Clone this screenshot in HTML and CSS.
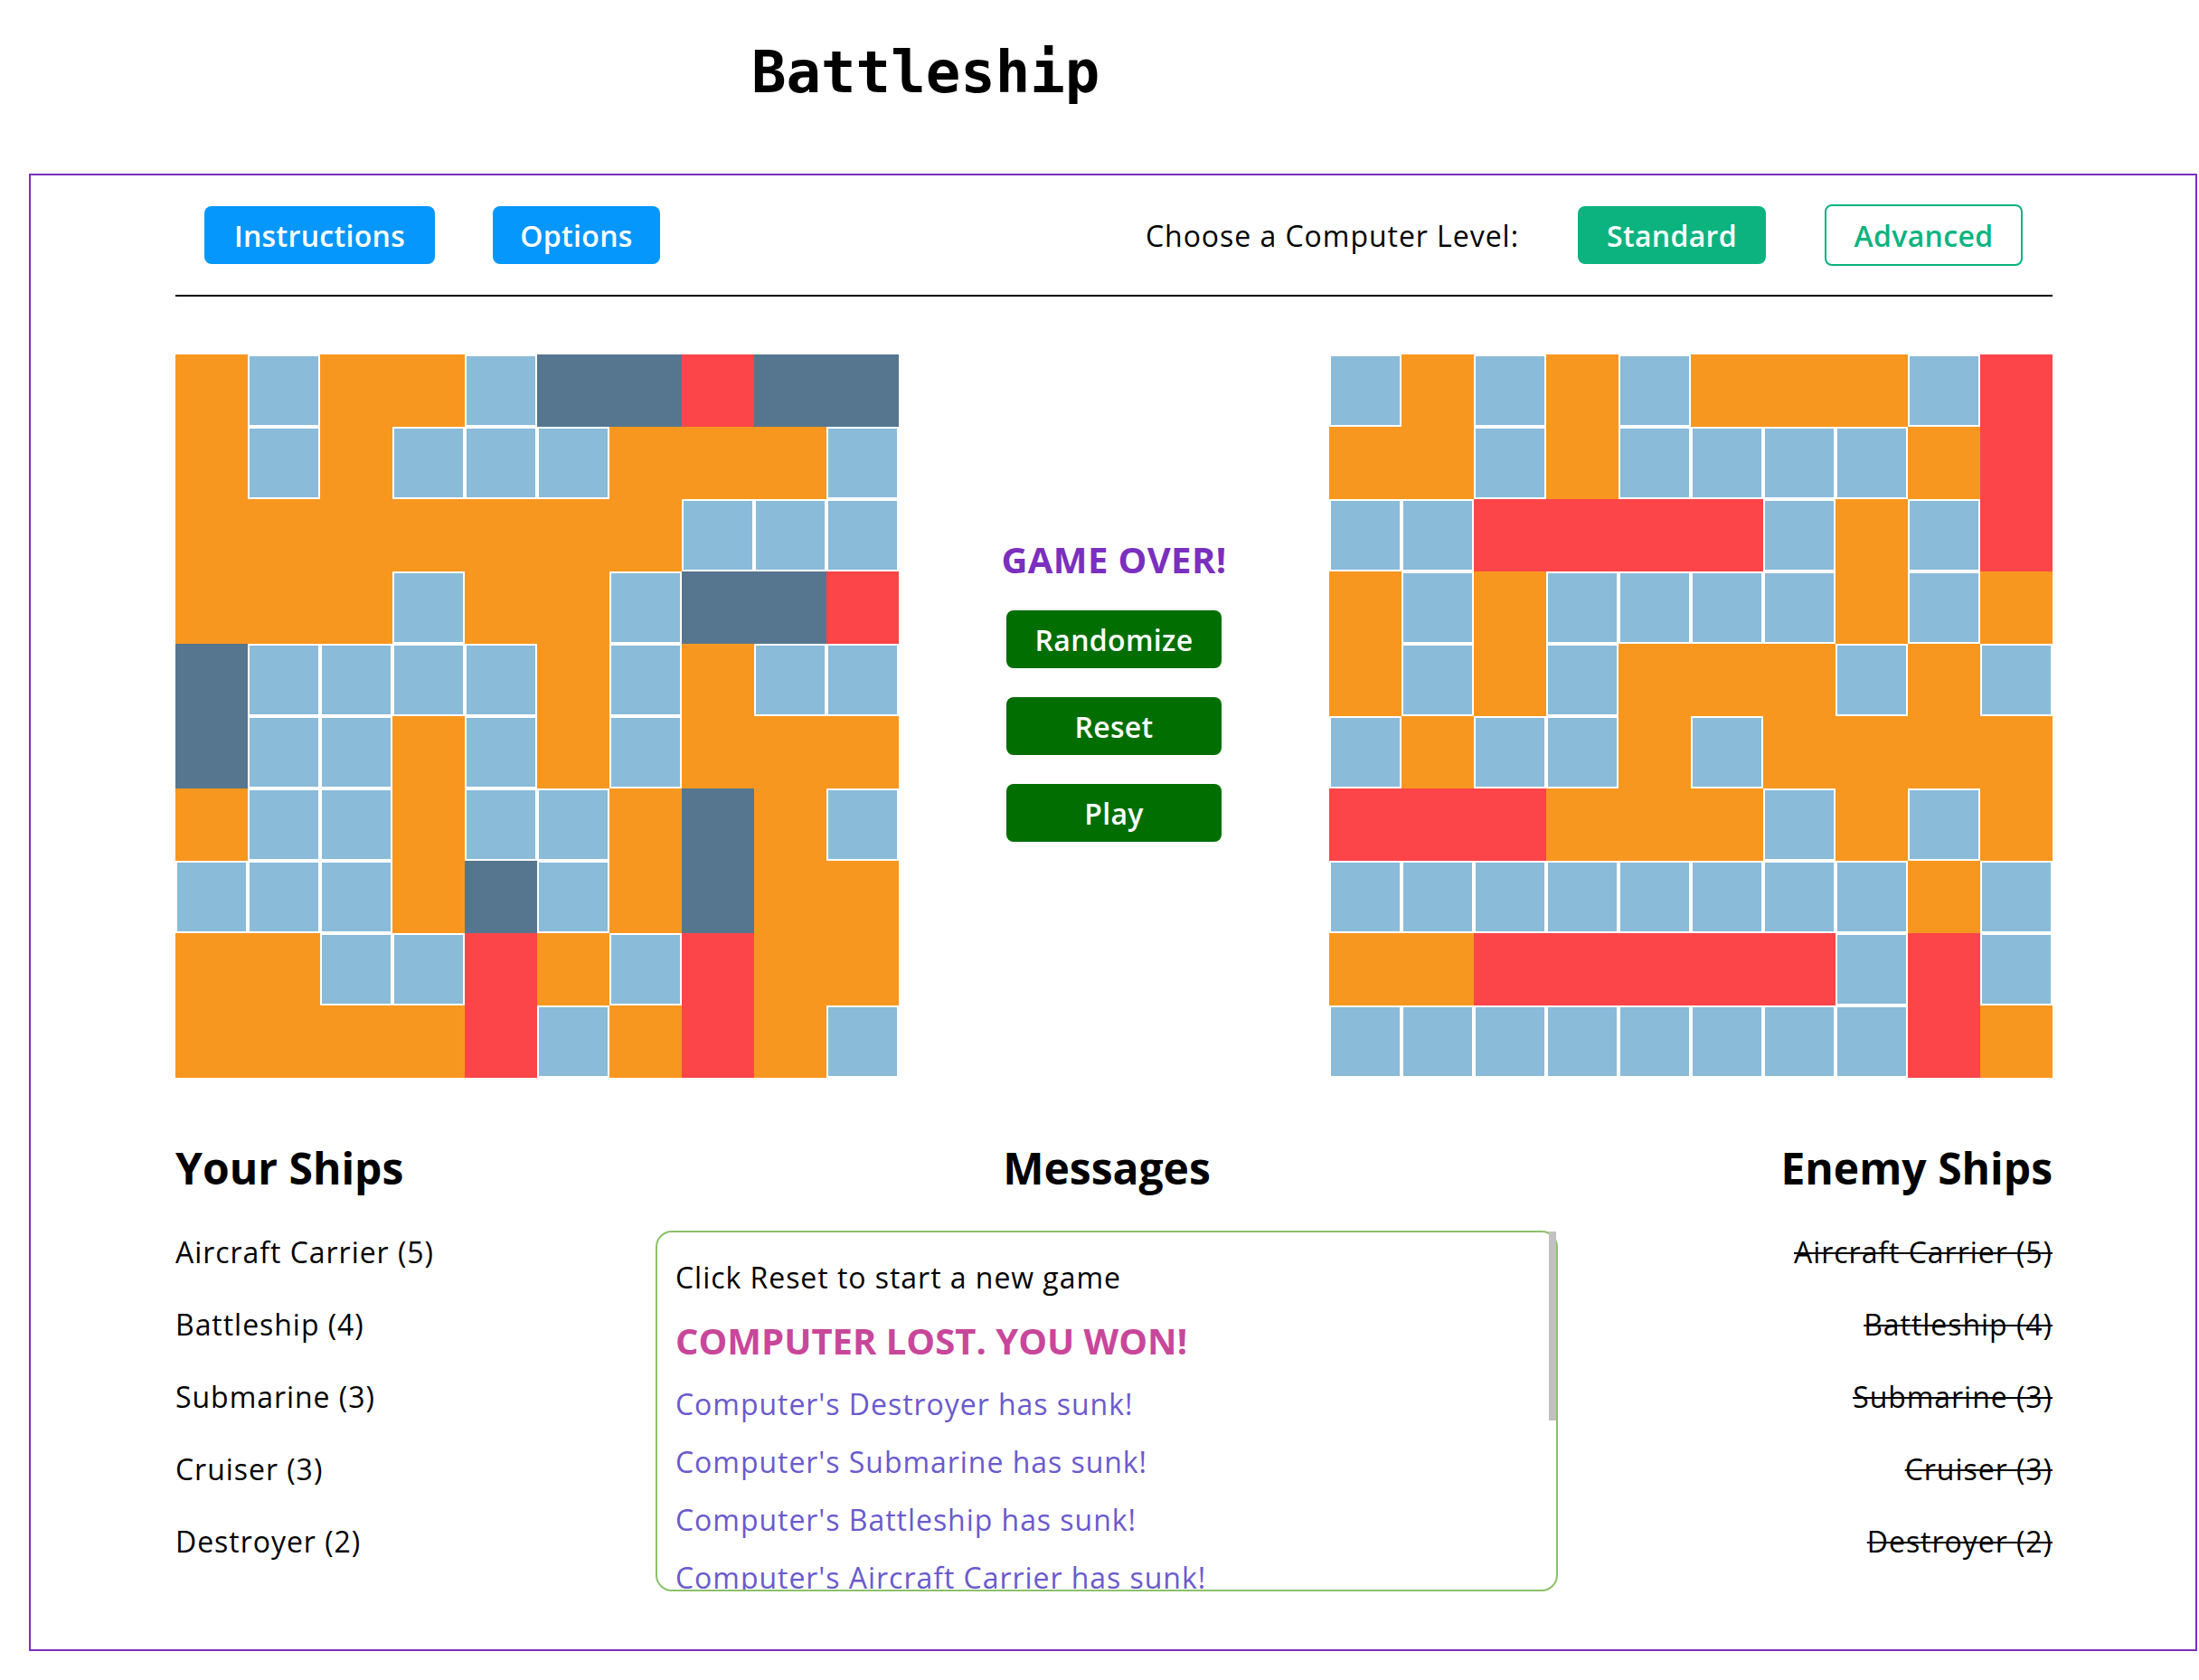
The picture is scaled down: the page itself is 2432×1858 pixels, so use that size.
FILE: index.html
```html
<!DOCTYPE html>
<html lang="en">
<head>
<meta charset="utf-8">
<title>Battleship</title>
<link rel="stylesheet" href="styles.css">
</head>
<body>
<h1 class="page-title">Battleship</h1>
<main class="game">
  <div class="toolbar">
    <div class="toolbar-group">
      <button class="btn btn-blue btn-instructions">Instructions</button>
      <button class="btn btn-blue btn-options">Options</button>
    </div>
    <div class="toolbar-group level-group">
      <span class="level-label">Choose a Computer Level:</span>
      <button class="btn btn-green btn-standard">Standard</button>
      <button class="btn btn-outline btn-advanced">Advanced</button>
    </div>
  </div>

  <div class="boards">
    <div class="board">
      <div class="c o"></div><div class="c b"></div><div class="c o"></div><div class="c o"></div><div class="c b"></div><div class="c d"></div><div class="c d"></div><div class="c r"></div><div class="c d"></div><div class="c d"></div>
      <div class="c o"></div><div class="c b"></div><div class="c o"></div><div class="c b"></div><div class="c b"></div><div class="c b"></div><div class="c o"></div><div class="c o"></div><div class="c o"></div><div class="c b"></div>
      <div class="c o"></div><div class="c o"></div><div class="c o"></div><div class="c o"></div><div class="c o"></div><div class="c o"></div><div class="c o"></div><div class="c b"></div><div class="c b"></div><div class="c b"></div>
      <div class="c o"></div><div class="c o"></div><div class="c o"></div><div class="c b"></div><div class="c o"></div><div class="c o"></div><div class="c b"></div><div class="c d"></div><div class="c d"></div><div class="c r"></div>
      <div class="c d"></div><div class="c b"></div><div class="c b"></div><div class="c b"></div><div class="c b"></div><div class="c o"></div><div class="c b"></div><div class="c o"></div><div class="c b"></div><div class="c b"></div>
      <div class="c d"></div><div class="c b"></div><div class="c b"></div><div class="c o"></div><div class="c b"></div><div class="c o"></div><div class="c b"></div><div class="c o"></div><div class="c o"></div><div class="c o"></div>
      <div class="c o"></div><div class="c b"></div><div class="c b"></div><div class="c o"></div><div class="c b"></div><div class="c b"></div><div class="c o"></div><div class="c d"></div><div class="c o"></div><div class="c b"></div>
      <div class="c b"></div><div class="c b"></div><div class="c b"></div><div class="c o"></div><div class="c d"></div><div class="c b"></div><div class="c o"></div><div class="c d"></div><div class="c o"></div><div class="c o"></div>
      <div class="c o"></div><div class="c o"></div><div class="c b"></div><div class="c b"></div><div class="c r"></div><div class="c o"></div><div class="c b"></div><div class="c r"></div><div class="c o"></div><div class="c o"></div>
      <div class="c o"></div><div class="c o"></div><div class="c o"></div><div class="c o"></div><div class="c r"></div><div class="c b"></div><div class="c o"></div><div class="c r"></div><div class="c o"></div><div class="c b"></div>
    </div>

    <div class="controls">
      <div class="game-over">GAME OVER!</div>
      <button class="btn btn-dark">Randomize</button>
      <button class="btn btn-dark">Reset</button>
      <button class="btn btn-dark">Play</button>
    </div>

    <div class="board">
      <div class="c b"></div><div class="c o"></div><div class="c b"></div><div class="c o"></div><div class="c b"></div><div class="c o"></div><div class="c o"></div><div class="c o"></div><div class="c b"></div><div class="c r"></div>
      <div class="c o"></div><div class="c o"></div><div class="c b"></div><div class="c o"></div><div class="c b"></div><div class="c b"></div><div class="c b"></div><div class="c b"></div><div class="c o"></div><div class="c r"></div>
      <div class="c b"></div><div class="c b"></div><div class="c r"></div><div class="c r"></div><div class="c r"></div><div class="c r"></div><div class="c b"></div><div class="c o"></div><div class="c b"></div><div class="c r"></div>
      <div class="c o"></div><div class="c b"></div><div class="c o"></div><div class="c b"></div><div class="c b"></div><div class="c b"></div><div class="c b"></div><div class="c o"></div><div class="c b"></div><div class="c o"></div>
      <div class="c o"></div><div class="c b"></div><div class="c o"></div><div class="c b"></div><div class="c o"></div><div class="c o"></div><div class="c o"></div><div class="c b"></div><div class="c o"></div><div class="c b"></div>
      <div class="c b"></div><div class="c o"></div><div class="c b"></div><div class="c b"></div><div class="c o"></div><div class="c b"></div><div class="c o"></div><div class="c o"></div><div class="c o"></div><div class="c o"></div>
      <div class="c r"></div><div class="c r"></div><div class="c r"></div><div class="c o"></div><div class="c o"></div><div class="c o"></div><div class="c b"></div><div class="c o"></div><div class="c b"></div><div class="c o"></div>
      <div class="c b"></div><div class="c b"></div><div class="c b"></div><div class="c b"></div><div class="c b"></div><div class="c b"></div><div class="c b"></div><div class="c b"></div><div class="c o"></div><div class="c b"></div>
      <div class="c o"></div><div class="c o"></div><div class="c r"></div><div class="c r"></div><div class="c r"></div><div class="c r"></div><div class="c r"></div><div class="c b"></div><div class="c r"></div><div class="c b"></div>
      <div class="c b"></div><div class="c b"></div><div class="c b"></div><div class="c b"></div><div class="c b"></div><div class="c b"></div><div class="c b"></div><div class="c b"></div><div class="c r"></div><div class="c o"></div>
    </div>
  </div>

  <div class="info">
    <section class="ships">
      <h2 class="section-title">Your Ships</h2>
      <ul class="ship-list">
        <li>Aircraft Carrier (5)</li>
        <li>Battleship (4)</li>
        <li>Submarine (3)</li>
        <li>Cruiser (3)</li>
        <li>Destroyer (2)</li>
      </ul>
    </section>
    <section class="messages-col">
      <h2 class="section-title center">Messages</h2>
      <div class="messages-frame">
        <div class="messages">
          <p class="msg">Click Reset to start a new game</p>
          <p class="msg msg-win">COMPUTER LOST. YOU WON!</p>
          <p class="msg msg-sunk">Computer's Destroyer has sunk!</p>
          <p class="msg msg-sunk">Computer's Submarine has sunk!</p>
          <p class="msg msg-sunk">Computer's Battleship has sunk!</p>
          <p class="msg msg-sunk">Computer's Aircraft Carrier has sunk!</p>
        </div>
        <span class="scroll-thumb"></span>
      </div>
    </section>
    <section class="ships ships-enemy">
      <h2 class="section-title">Enemy Ships</h2>
      <ul class="ship-list sunk">
        <li>Aircraft Carrier (5)</li>
        <li>Battleship (4)</li>
        <li>Submarine (3)</li>
        <li>Cruiser (3)</li>
        <li>Destroyer (2)</li>
      </ul>
    </section>
  </div>
</main>
</body>
</html>
```

FILE: styles.css
```css
* { box-sizing: border-box; }

body {
  margin: 0;
  font-family: "Open Sans", "DejaVu Sans", sans-serif;
  font-size: 32px;
  letter-spacing: 0.03em;
  color: #000;
  background: #fff;
}

.page-title {
  margin: 0;
  padding: 43px 0 0 831px;
  font-family: "DejaVu Sans Mono", monospace;
  font-weight: 700;
  font-size: 64px;
  line-height: 74px;
  letter-spacing: 0;
}

.game {
  margin: 75px 0 0 32px;
  width: 2398px;
  height: 1634px;
  border: 2px solid #7b2fbe;
  padding: 0 158px 0 160px;
}

/* toolbar */
.toolbar {
  height: 134px;
  display: flex;
  align-items: center;
  justify-content: space-between;
  padding: 0 33px 0 32px;
  border-bottom: 2px solid #000;
}
.toolbar-group {
  display: flex;
  align-items: center;
  gap: 64px;
}
.level-group { gap: 65px; }

.btn {
  font-family: inherit;
  font-size: 32px;
  font-weight: 600;
  letter-spacing: 0.01em;
  height: 64px;
  padding: 0;
  border: none;
  border-radius: 8px;
  color: #fff;
  cursor: pointer;
}
.btn-blue { background: #0597fb; }
.btn-instructions { width: 255px; }
.btn-options { width: 185px; }
.btn-green { background: #0cb37f; }
.btn-standard { width: 208px; }
.btn-outline {
  background: #fff;
  color: #0cb37f;
  border: 2px solid #0cb37f;
  height: 68px;
}
.btn-advanced { width: 219px; }
.level-label { font-size: 32px; }

/* boards */
.boards {
  margin-top: 64px;
  display: grid;
  grid-template-columns: 800px 1fr 800px;
}
.board {
  display: grid;
  grid-template-columns: repeat(10, 80px);
  grid-template-rows: repeat(10, 80px);
}
.c { width: 80px; height: 80px; }
.o { background: #f8971f; }
.d { background: #56768f; }
.r { background: #fc4549; }
.b { background: #8abbd9; border: 2px solid #fff; }

.controls {
  display: flex;
  flex-direction: column;
  align-items: center;
  padding-top: 203px;
  gap: 32px;
}
.game-over {
  font-size: 40px;
  line-height: 48px;
  font-weight: 700;
  color: #7b2fbe;
  letter-spacing: 0.01em;
}
.btn-dark {
  background: #006e00;
  width: 238px;
}

/* bottom info */
.info {
  margin-top: 71px;
  display: grid;
  grid-template-columns: 531px 998px 1fr;
}
.section-title {
  margin: 0;
  font-size: 48px;
  line-height: 58px;
  font-weight: 700;
  letter-spacing: 0;
}
.center { text-align: center; }
.ship-list {
  list-style: none;
  margin: 24px 0 0;
  padding: 0;
}
.ship-list li {
  line-height: 80px;
}
.ships-enemy { text-align: right; }
.sunk li { text-decoration: line-through; text-decoration-thickness: 2px; }

.messages-frame {
  position: relative;
  margin-top: 40px;
}
.messages {
  height: 399px;
  border: 2px solid #8cc06b;
  border-radius: 18px;
  padding: 26px 20px 0;
  overflow: hidden;
}
.scroll-thumb {
  position: absolute;
  top: 1px;
  right: 2px;
  width: 8px;
  height: 209px;
  background: #c1c1c1;
}

.msg {
  margin: 0 0 16px;
  line-height: 48px;
  white-space: nowrap;
}
.msg-win {
  font-size: 40px;
  line-height: 60px;
  font-weight: 700;
  color: #c8479a;
  letter-spacing: 0;
}
.msg-sunk { color: #6a5acd; }
```
